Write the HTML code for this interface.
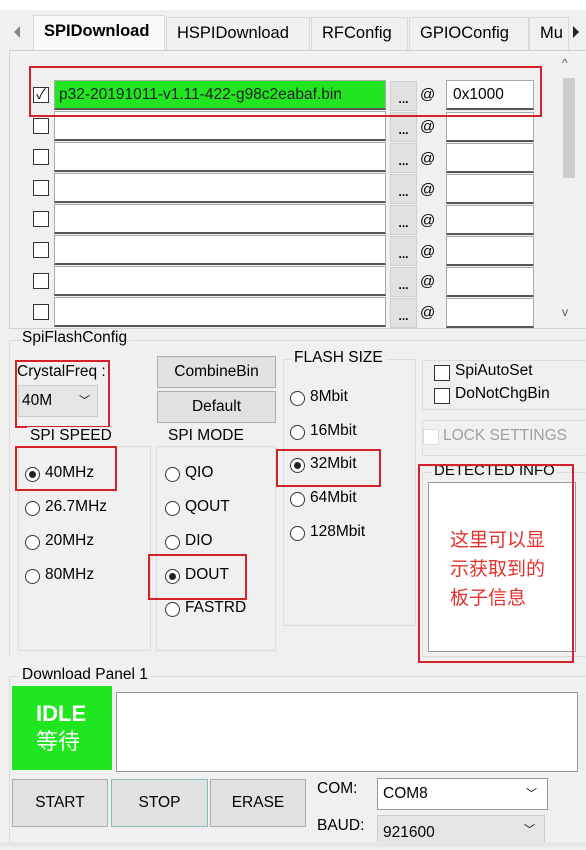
<!DOCTYPE html><html><head><meta charset="utf-8"><style>
*{box-sizing:border-box}body{margin:0;width:586px;height:847px;background:#f0f0f0;font-family:"Liberation Sans","Noto Sans CJK SC",sans-serif;font-size:15.5px;color:#000;position:relative;overflow:hidden}
.a{position:absolute}
.tab{position:absolute;top:17px;height:33px;border:1px solid #d9d9d9;border-bottom:none;background:#f0f0f0;padding:0 10px;line-height:30px;font-size:16.5px}
.cb{position:absolute;width:16px;height:16px;border:1px solid #333;background:#fff}
.tf{position:absolute;height:30px;background:#fff;border:1px solid #aaa;border-bottom:2px solid #555}
.dots{position:absolute;width:27px;height:30px;background:#e1e1e1;border:1px solid #cfcfcf;font-size:12px;text-align:center;line-height:34px;font-weight:bold}
.at{position:absolute;font-size:15px}
.red{position:absolute;border:2px solid #d2232a}
.btn{position:absolute;background:#e1e1e1;border:1px solid #adadad;text-align:center;font-size:15.5px}
.rd{position:absolute;width:15px;height:15px;border:1px solid #333;border-radius:50%;background:#fff}
.rd.on:after{content:"";position:absolute;left:3px;top:3px;width:7px;height:7px;border-radius:50%;background:#222}
.lbl{position:absolute;font-size:15.5px;white-space:nowrap}
.grp{position:absolute;border:1px solid #dcdcdc}
</style></head><body>
<div class="a" style="left:0;top:0;width:586px;height:10px;background:#fff"></div>
<div class="a" style="left:14px;top:26px;width:0;height:0;border-top:6px solid transparent;border-bottom:6px solid transparent;border-right:6px solid #888"></div>
<div class="tab" style="left:33px;width:132px;background:#f9f9f9;font-weight:bold;top:15px;height:36px">SPIDownload</div>
<div class="tab" style="left:166px;width:144px">HSPIDownload</div>
<div class="tab" style="left:311px;width:97px">RFConfig</div>
<div class="tab" style="left:409px;width:120px">GPIOConfig</div>
<div class="tab" style="left:529px;width:40px;overflow:hidden">Mu</div>
<div class="a" style="left:573px;top:26px;width:0;height:0;border-top:6px solid transparent;border-bottom:6px solid transparent;border-left:6px solid #222"></div>
<div class="a" style="left:9px;top:50px;width:577px;height:279px;border:1px solid #d0d0d0;border-right:none"></div>
<div class="a" style="left:558px;top:60px;width:20px;height:265px;background:#f0f0f0"></div>
<div class="a" style="left:563px;top:78px;width:12px;height:100px;background:#cdcdcd"></div>
<div class="a" style="left:562px;top:56px;font-size:12px;color:#555">^</div>
<div class="a" style="left:562px;top:305px;font-size:12px;color:#555">v</div>

<div class="tf" style="left:54px;top:80px;width:332px;background:#21e521;color:#222;line-height:27px;padding-left:4px;white-space:nowrap;overflow:hidden">p32-20191011-v1.11-422-g98c2eabaf.bin</div>
<div class="cb" style="left:33px;top:87px;font-size:14px;line-height:13px;text-align:center">✓</div>
<div class="tf" style="left:54px;top:111px;width:332px"></div><div class="cb" style="left:33px;top:118px"></div>
<div class="tf" style="left:54px;top:142px;width:332px"></div><div class="cb" style="left:33px;top:149px"></div>
<div class="tf" style="left:54px;top:173px;width:332px"></div><div class="cb" style="left:33px;top:180px"></div>
<div class="tf" style="left:54px;top:204px;width:332px"></div><div class="cb" style="left:33px;top:211px"></div>
<div class="tf" style="left:54px;top:235px;width:332px"></div><div class="cb" style="left:33px;top:242px"></div>
<div class="tf" style="left:54px;top:266px;width:332px"></div><div class="cb" style="left:33px;top:273px"></div>
<div class="tf" style="left:54px;top:297px;width:332px"></div><div class="cb" style="left:33px;top:304px"></div>

<div class="dots" style="left:390px;top:81px">...</div><div class="at" style="left:420px;top:86px">@</div><div class="tf" style="left:446px;top:80px;width:88px;line-height:27px;padding-left:6px">0x1000</div>
<div class="dots" style="left:390px;top:112px">...</div><div class="at" style="left:420px;top:118px">@</div><div class="tf" style="left:446px;top:112px;width:88px"></div>
<div class="dots" style="left:390px;top:143px">...</div><div class="at" style="left:420px;top:150px">@</div><div class="tf" style="left:446px;top:143px;width:88px"></div>
<div class="dots" style="left:390px;top:174px">...</div><div class="at" style="left:420px;top:181px">@</div><div class="tf" style="left:446px;top:174px;width:88px"></div>
<div class="dots" style="left:390px;top:205px">...</div><div class="at" style="left:420px;top:212px">@</div><div class="tf" style="left:446px;top:205px;width:88px"></div>
<div class="dots" style="left:390px;top:236px">...</div><div class="at" style="left:420px;top:243px">@</div><div class="tf" style="left:446px;top:236px;width:88px"></div>
<div class="dots" style="left:390px;top:267px">...</div><div class="at" style="left:420px;top:273px">@</div><div class="tf" style="left:446px;top:267px;width:88px"></div>
<div class="dots" style="left:390px;top:298px">...</div><div class="at" style="left:420px;top:304px">@</div><div class="tf" style="left:446px;top:298px;width:88px"></div>
<div class="red" style="left:29px;top:66px;width:513px;height:51px"></div>

<div class="grp" style="left:9px;top:340px;width:577px;height:315px;border-right:none;border-bottom:none"></div>
<div class="lbl" style="left:20px;top:329px;background:#f0f0f0;padding:0 2px">SpiFlashConfig</div>
<div class="lbl" style="left:17px;top:363px">CrystalFreq :</div>
<div class="a" style="left:18px;top:385px;width:80px;height:32px;background:#e5e5e5;border:1px solid #ccc;line-height:30px;padding-left:3px">40M<span style="position:absolute;left:60px;font-size:11px">﹀</span></div>
<div class="red" style="left:15px;top:360px;width:95px;height:68px"></div>
<div class="btn" style="left:157px;top:356px;width:119px;height:32px;line-height:30px">CombineBin</div>
<div class="btn" style="left:157px;top:391px;width:119px;height:32px;line-height:30px">Default</div>

<div class="grp" style="left:18px;top:446px;width:133px;height:205px"></div>
<div class="lbl" style="left:27px;top:427px;background:#f0f0f0;padding:0 3px">SPI SPEED</div>
<div class="rd on" style="left:25px;top:467px"></div><div class="lbl" style="left:45px;top:464px">40MHz</div>
<div class="rd" style="left:25px;top:501px"></div><div class="lbl" style="left:45px;top:498px">26.7MHz</div>
<div class="rd" style="left:25px;top:535px"></div><div class="lbl" style="left:45px;top:532px">20MHz</div>
<div class="rd" style="left:25px;top:569px"></div><div class="lbl" style="left:45px;top:566px">80MHz</div>
<div class="red" style="left:15px;top:446px;width:102px;height:45px"></div>

<div class="grp" style="left:156px;top:446px;width:120px;height:205px"></div>
<div class="lbl" style="left:165px;top:427px;background:#f0f0f0;padding:0 3px">SPI MODE</div>
<div class="rd" style="left:165px;top:467px"></div><div class="lbl" style="left:185px;top:464px">QIO</div>
<div class="rd" style="left:165px;top:501px"></div><div class="lbl" style="left:185px;top:498px">QOUT</div>
<div class="rd" style="left:165px;top:535px"></div><div class="lbl" style="left:185px;top:532px">DIO</div>
<div class="rd on" style="left:165px;top:569px"></div><div class="lbl" style="left:185px;top:566px">DOUT</div>
<div class="rd" style="left:165px;top:602px"></div><div class="lbl" style="left:185px;top:599px">FASTRD</div>
<div class="red" style="left:148px;top:554px;width:99px;height:46px"></div>

<div class="grp" style="left:283px;top:359px;width:133px;height:267px"></div>
<div class="lbl" style="left:291px;top:349px;background:#f0f0f0;padding:0 3px">FLASH SIZE</div>
<div class="rd" style="left:290px;top:391px"></div><div class="lbl" style="left:310px;top:388px">8Mbit</div>
<div class="rd" style="left:290px;top:425px"></div><div class="lbl" style="left:310px;top:422px">16Mbit</div>
<div class="rd on" style="left:290px;top:458px"></div><div class="lbl" style="left:310px;top:455px">32Mbit</div>
<div class="rd" style="left:290px;top:492px"></div><div class="lbl" style="left:310px;top:489px">64Mbit</div>
<div class="rd" style="left:290px;top:526px"></div><div class="lbl" style="left:310px;top:523px">128Mbit</div>
<div class="red" style="left:276px;top:449px;width:105px;height:38px"></div>

<div class="grp" style="left:422px;top:360px;width:164px;height:50px;border-right:none"></div>
<div class="cb" style="left:434px;top:365px"></div><div class="lbl" style="left:455px;top:362px">SpiAutoSet</div>
<div class="cb" style="left:434px;top:388px"></div><div class="lbl" style="left:455px;top:385px">DoNotChgBin</div>
<div class="grp" style="left:422px;top:420px;width:164px;height:36px;border-right:none"></div>
<div class="cb" style="left:423px;top:429px;border-color:#ddd"></div><div class="lbl" style="left:443px;top:427px;color:#a0a0a0">LOCK SETTINGS</div>
<div class="grp" style="left:422px;top:472px;width:164px;height:185px;border-right:none"></div>
<div class="lbl" style="left:432px;top:462px;background:#f0f0f0;padding:0 2px;font-size:15px">DETECTED INFO</div>
<div class="a" style="left:428px;top:482px;width:148px;height:170px;background:#fff;border:1px solid #999"></div>
<div class="a" style="left:450px;top:524px;color:#e3322d;font-size:19px;line-height:29px;font-family:'Noto Sans CJK SC',sans-serif">这里可以显<br>示获取到的<br>板子信息</div>
<div class="red" style="left:418px;top:464px;width:156px;height:199px"></div>

<div class="grp" style="left:9px;top:676px;width:577px;height:170px;border-right:none;border-bottom:none"></div>
<div class="lbl" style="left:20px;top:666px;background:#f0f0f0;padding:0 2px">Download Panel 1</div>
<div class="a" style="left:12px;top:686px;width:100px;height:84px;background:#1fe61f;color:#fff;font-size:22px;line-height:28px;padding:14px 0 0 24px;font-weight:bold;font-family:'Liberation Sans','Noto Sans CJK SC',sans-serif">IDLE<br><span style="font-weight:normal">等待</span></div>
<div class="a" style="left:116px;top:692px;width:462px;height:80px;background:#fff;border:1px solid #999"></div>
<div class="btn" style="left:12px;top:779px;width:96px;height:48px;line-height:46px">START</div>
<div class="btn" style="left:111px;top:779px;width:97px;height:48px;line-height:46px;border-color:#8bb">STOP</div>
<div class="btn" style="left:210px;top:779px;width:96px;height:48px;line-height:46px">ERASE</div>
<div class="lbl" style="left:317px;top:780px">COM:</div>
<div class="a" style="left:377px;top:778px;width:171px;height:32px;background:#fff;border:1px solid #999;line-height:30px;padding-left:5px">COM8<span style="position:absolute;left:148px;font-size:11px">﹀</span></div>
<div class="lbl" style="left:317px;top:817px">BAUD:</div>
<div class="a" style="left:377px;top:815px;width:168px;height:32px;background:#e5e5e5;border:1px solid #ccc;line-height:34px;padding-left:5px">921600<span style="position:absolute;left:146px;font-size:11px;line-height:28px">﹀</span></div>
<div class="a" style="left:0;top:842px;width:586px;height:5px;background:#e6e6e6"></div>
</body></html>
